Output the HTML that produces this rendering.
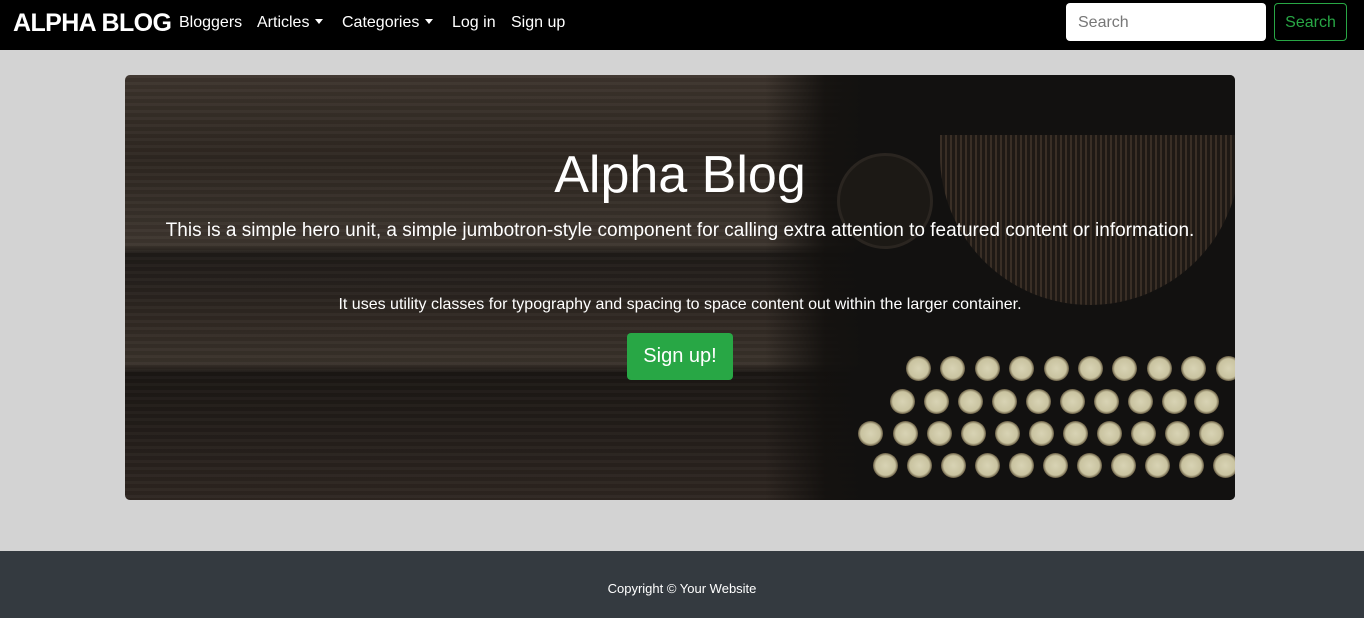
<!DOCTYPE html>
<html><head><meta charset="utf-8"><style>
*{box-sizing:border-box;margin:0;padding:0}
html,body{width:1364px;height:618px;overflow:hidden}
body{background:#d3d3d3;font-family:"Liberation Sans",sans-serif;position:relative}
nav{position:absolute;left:0;top:0;width:1364px;height:50px;background:#000;color:#fff}
.brand{position:absolute;left:13px;top:9px;font-size:25px;font-weight:bold;letter-spacing:-0.6px}
.nl{position:absolute;top:14px;font-size:16px}
.caret{display:inline-block;width:0;height:0;border-left:4px solid transparent;border-right:4px solid transparent;border-top:5px solid #fff;margin-left:6px;vertical-align:3px}
.search{position:absolute;left:1066px;top:3px;width:200px;height:38px;background:#fff;border-radius:4px;color:#777;font-size:16px;padding:11px 12px 0}
.sbtn{position:absolute;left:1274px;top:3px;width:73px;height:38px;border:1px solid #28a745;border-radius:4px;color:#28a745;font-size:16px;text-align:center;line-height:38px}
.hero{position:absolute;left:125px;top:75px;width:1110px;height:425px;border-radius:5px;overflow:hidden;
background:linear-gradient(180deg,#3d342d 0,#2e2721 20%,#3e362f 40%,#1f1b18 42%,#332b25 60%,#3a322b 68%,#1b1714 70%,#2e2621 100%)}
.wood{position:absolute;left:0;top:0;width:1110px;height:425px;background:repeating-linear-gradient(180deg,rgba(255,255,255,0.025) 0 3px,rgba(0,0,0,0.05) 3px 7px)}
.tw{position:absolute;left:640px;top:0;width:470px;height:425px;background:linear-gradient(90deg,rgba(18,16,14,0) 0,rgba(18,16,14,0.9) 60px,#121110 100px)}
.tw2{position:absolute;left:815px;top:60px;width:300px;height:170px;border-radius:0 0 150px 150px;background:repeating-linear-gradient(90deg,#3a2f26 0 2px,#1e1915 2px 5px)}
.wheel{position:absolute;left:712px;top:78px;width:96px;height:96px;border-radius:50%;background:#1c1915;border:3px solid #2a2520}
.key{position:absolute;width:25px;height:25px;border-radius:50%;background:radial-gradient(circle,#d8d3b4 0,#c9c3a0 55%,#6b6046 70%,#b9ae85 80%,#2a251e 100%)}
.h1{position:absolute;left:0;width:1110px;top:70px;text-align:center;color:#fff;font-size:52px;font-weight:300}
.lead{position:absolute;left:0;width:1110px;top:145px;text-align:center;color:#fff;font-size:19px}
.small{position:absolute;left:0;width:1110px;top:221px;text-align:center;color:#fff;font-size:16px}
.btn{position:absolute;left:502px;top:258px;width:106px;height:47px;background:#28a745;border-radius:4px;color:#fff;font-size:20px;text-align:center;line-height:47px}
footer{position:absolute;left:0;top:551px;width:1364px;height:67px;background:#343a40;color:#fff;font-size:13px;text-align:center;line-height:75px}
</style></head><body>
<nav>
<div class="brand">ALPHA BLOG</div>
<div class="nl" style="left:179px">Bloggers</div>
<div class="nl" style="left:257px">Articles<span class="caret"></span></div>
<div class="nl" style="left:342px">Categories<span class="caret"></span></div>
<div class="nl" style="left:452px">Log in</div>
<div class="nl" style="left:511px">Sign up</div>
<div class="search">Search</div>
<div class="sbtn">Search</div>
</nav>
<div class="hero">
<div class="wood"></div>
<div class="tw"></div>
<div class="tw2"></div>
<div class="wheel"></div>
<div class="key" style="left:781px;top:281px"></div><div class="key" style="left:815px;top:281px"></div><div class="key" style="left:850px;top:281px"></div><div class="key" style="left:884px;top:281px"></div><div class="key" style="left:919px;top:281px"></div><div class="key" style="left:953px;top:281px"></div><div class="key" style="left:987px;top:281px"></div><div class="key" style="left:1022px;top:281px"></div><div class="key" style="left:1056px;top:281px"></div><div class="key" style="left:1091px;top:281px"></div>
<div class="key" style="left:765px;top:314px"></div><div class="key" style="left:799px;top:314px"></div><div class="key" style="left:833px;top:314px"></div><div class="key" style="left:867px;top:314px"></div><div class="key" style="left:901px;top:314px"></div><div class="key" style="left:935px;top:314px"></div><div class="key" style="left:969px;top:314px"></div><div class="key" style="left:1003px;top:314px"></div><div class="key" style="left:1037px;top:314px"></div><div class="key" style="left:1069px;top:314px"></div>
<div class="key" style="left:733px;top:346px"></div><div class="key" style="left:768px;top:346px"></div><div class="key" style="left:802px;top:346px"></div><div class="key" style="left:836px;top:346px"></div><div class="key" style="left:870px;top:346px"></div><div class="key" style="left:904px;top:346px"></div><div class="key" style="left:938px;top:346px"></div><div class="key" style="left:972px;top:346px"></div><div class="key" style="left:1006px;top:346px"></div><div class="key" style="left:1040px;top:346px"></div><div class="key" style="left:1074px;top:346px"></div>
<div class="key" style="left:748px;top:378px"></div><div class="key" style="left:782px;top:378px"></div><div class="key" style="left:816px;top:378px"></div><div class="key" style="left:850px;top:378px"></div><div class="key" style="left:884px;top:378px"></div><div class="key" style="left:918px;top:378px"></div><div class="key" style="left:952px;top:378px"></div><div class="key" style="left:986px;top:378px"></div><div class="key" style="left:1020px;top:378px"></div><div class="key" style="left:1054px;top:378px"></div><div class="key" style="left:1088px;top:378px"></div>
<div class="h1">Alpha Blog</div>
<div class="lead">This is a simple hero unit, a simple jumbotron-style component for calling extra attention to featured content or information.</div>
<div class="small">It uses utility classes for typography and spacing to space content out within the larger container.</div>
<div class="btn">Sign up!</div>
</div>
<footer>Copyright © Your Website</footer>
</body></html>
